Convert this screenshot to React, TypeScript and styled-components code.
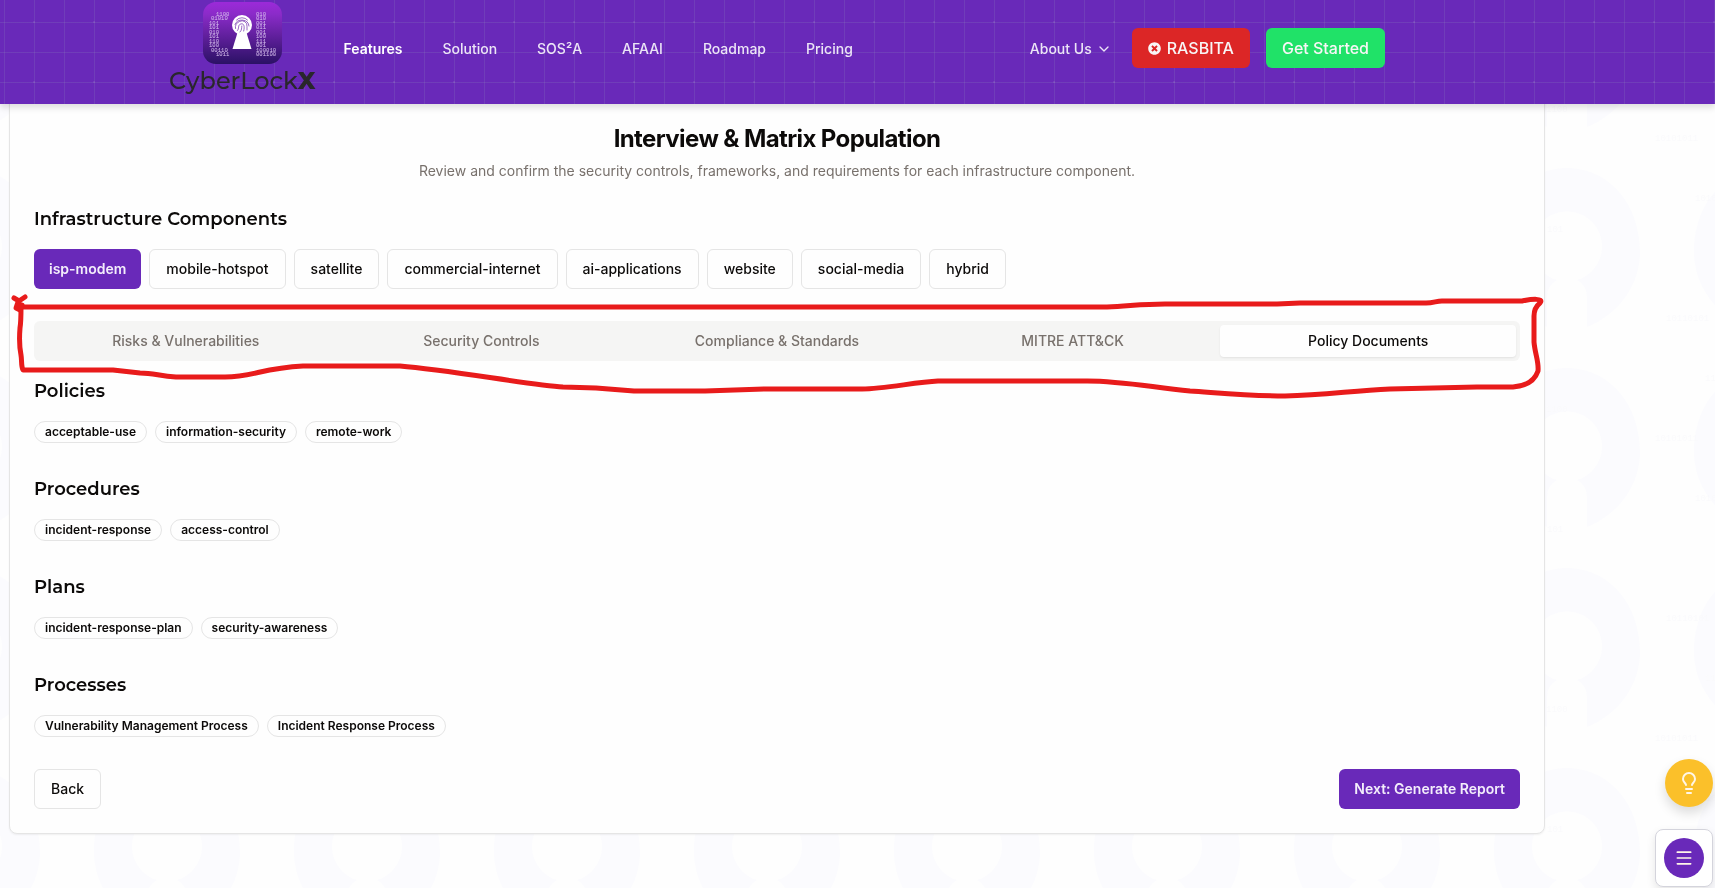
import React, { useState } from "react";
import styled, { createGlobalStyle } from "styled-components";
import { ChevronDown, Lightbulb, Menu } from "lucide-react";
import { FaTimesCircle } from "react-icons/fa";

const purple = "#6929b9";
const ink = "#0c0a09";
const muted = "#78716c";
const line = "#e5e5e5";

const GlobalStyle = createGlobalStyle`
  *, *::before, *::after { box-sizing: border-box; }
  body {
    margin: 0;
    background: #fefefe;
    color: ${ink};
    font-family: Inter, "Liberation Sans", sans-serif;
    font-size: 14px;
    line-height: 20px;
  }
  button { font: inherit; cursor: pointer; }
  a { color: inherit; text-decoration: none; }
  h1, h2, p { margin: 0; }
`;

const Backdrop = styled.svg`
  position: fixed;
  inset: 0;
  width: 100%;
  height: 100%;
  z-index: -1;
`;

const Header = styled.header`
  position: fixed;
  inset: 0 0 auto 0;
  z-index: 10;
  height: 104px;
  padding-right: 161px;
  background-color: ${purple};
  background-image:
    radial-gradient(circle at 1px 1px, rgba(255, 255, 255, 0.08) 1px, transparent 1px),
    linear-gradient(90deg, rgba(150, 170, 190, 0.16) 1px, transparent 1px),
    linear-gradient(rgba(150, 170, 190, 0.16) 1px, transparent 1px);
  background-size: 60px 60px, 30px 30px, 30px 30px;
  background-position: 33px 21px, 4px 22px, 4px 22px;
  box-shadow: 0 4px 6px rgba(0, 0, 0, 0.12);
`;

const HeaderInner = styled.div`
  display: flex;
  align-items: flex-start;
  max-width: 1280px;
  margin: 0 auto;
  padding: 0 32px;
`;

const LogoLink = styled.a`
  display: flex;
  flex-direction: column;
  align-items: center;
  padding-top: 2px;
  color: #29272b;
`;

const Wordmark = styled.span`
  font-family: Montserrat, "DejaVu Sans", sans-serif;
  font-size: 24px;
  line-height: 34px;
  font-weight: 500;

  b { font-weight: 800; }
`;

const Nav = styled.nav`
  display: flex;
  gap: 40px;
  margin-left: 28px;
  padding-top: 39px;
`;

const NavLink = styled.a<{ $current?: boolean }>`
  color: ${(p) => (p.$current ? "#ffffff" : "#ece5f6")};
  font-weight: ${(p) => (p.$current ? 600 : 500)};
`;

const HeaderActions = styled.div`
  display: flex;
  align-items: center;
  gap: 16px;
  margin-left: auto;
  padding-top: 28px;
`;

const MenuButton = styled.button`
  display: flex;
  align-items: center;
  gap: 4px;
  margin-right: 4px;
  padding: 2px 0 0;
  border: 0;
  background: none;
  color: #ece5f6;
  font-weight: 500;
`;

const ActionLink = styled.a<{ $tone: string }>`
  display: flex;
  align-items: center;
  gap: 6px;
  height: 40px;
  padding: 0 16px;
  border-radius: 6px;
  background: ${(p) => p.$tone};
  color: #f8f6f6;
  font-size: 16px;
  font-weight: 500;
`;

const Main = styled.main`
  padding: 96px 170px 54px 9px;
`;

const Card = styled.section`
  padding: 24px;
  border: 1px solid ${line};
  border-radius: 8px;
  background: #fefefe;
  box-shadow: 0 1px 2px rgba(0, 0, 0, 0.06);
`;

const Intro = styled.div`
  display: flex;
  flex-direction: column;
  gap: 6px;
  margin-bottom: 24px;
  padding-top: 2px;
  text-align: center;
`;

const Title = styled.h1`
  font-size: 24px;
  line-height: 32px;
  font-weight: 700;
  letter-spacing: -0.025em;
`;

const Subtitle = styled.p`
  color: ${muted};
`;

const Heading = styled.h2`
  margin-bottom: 16px;
  font-family: Montserrat, Inter, sans-serif;
  font-size: 18px;
  line-height: 28px;
  font-weight: 600;
`;

const Row = styled.div`
  display: flex;
  flex-wrap: wrap;
  gap: 8px;
`;

const Button = styled.button<{ $primary?: boolean }>`
  height: 40px;
  padding: 0 ${(p) => (p.$primary ? 15 : 16)}px;
  border: ${(p) => (p.$primary ? "0" : `1px solid ${line}`)};
  border-radius: 6px;
  background: ${(p) => (p.$primary ? purple : "#fefefe")};
  color: ${(p) => (p.$primary ? "#f3edfb" : ink)};
  font-weight: ${(p) => (p.$primary ? 600 : 500)};
`;

const TabList = styled.div`
  display: grid;
  grid-template-columns: repeat(5, 1fr);
  margin: 32px 0 16px;
  padding: 4px;
  border-radius: 6px;
  background: #f5f5f4;
`;

const Tab = styled.button<{ $active: boolean }>`
  height: 32px;
  padding: 0 12px;
  border: 0;
  border-radius: 4px;
  background: ${(p) => (p.$active ? "#fefefe" : "transparent")};
  box-shadow: ${(p) => (p.$active ? "0 1px 2px rgba(0, 0, 0, 0.08)" : "none")};
  color: ${(p) => (p.$active ? ink : muted)};
  font-weight: 500;
`;

const Groups = styled.div`
  display: flex;
  flex-direction: column;
  gap: 32px;
`;

const Badge = styled.span`
  padding: 2px 10px;
  border: 1px solid ${line};
  border-radius: 11px;
  font-size: 12px;
  line-height: 16px;
  height: 22px;
  font-weight: 600;
`;

const Footer = styled.div`
  display: flex;
  justify-content: space-between;
  margin-top: 32px;
`;

const Floating = styled.div`
  position: fixed;
  right: 2px;
  bottom: 1px;
  z-index: 20;
  display: flex;
  flex-direction: column;
  align-items: flex-end;
  gap: 22px;
`;

const RoundButton = styled.button<{ $size: number; $tone: string }>`
  display: grid;
  place-items: center;
  width: ${(p) => p.$size}px;
  height: ${(p) => p.$size}px;
  padding: 0;
  border: 0;
  border-radius: 50%;
  background: ${(p) => p.$tone};
  color: #fff6e8;
  box-shadow: ${(p) => (p.$size > 40 ? "0 6px 12px rgba(0, 0, 0, 0.14)" : "none")};
`;

const MenuFrame = styled.div`
  padding: 8px;
  border: 1px solid #d4d4dc;
  border-radius: 8px;
  background: #ffffff;
  box-shadow: 0 4px 10px rgba(0, 0, 0, 0.1);
`;

const Markup = styled.svg`
  position: absolute;
  top: 0;
  left: 0;
  z-index: 5;
  pointer-events: none;
`;

const leftBits: [number, string][] = [
  [13, "1100"], [8, "01010"], [6, "101"], [6, "101"], [6, "010"],
  [6, "101"], [6, "110"], [6, "100"], [8, "00110"], [13, "1011"],
];
const rightBits = ["010", "010", "001", "011", "001", "100", "111", "001", "100010", "001100"];

function Logo() {
  return (
    <svg width="79" height="62" viewBox="0 0 79 62" aria-hidden="true">
      <defs>
        <linearGradient id="logoFill" x1="0" y1="0" x2="0" y2="1">
          <stop offset="0" stopColor="#9c2ad9" />
          <stop offset="0.2" stopColor="#8a2bc8" />
          <stop offset="1" stopColor="#2b1165" />
        </linearGradient>
      </defs>
      <rect width="79" height="62" rx="13" fill="url(#logoFill)" />
      <g fill="#d9c3ef" fontFamily="Liberation Mono, monospace" fontSize="5.6">
        {leftBits.map(([x, bits], i) => (
          <text key={i} x={x} y={13.5 + i * 4.5}>{bits}</text>
        ))}
        {rightBits.map((bits, i) => (
          <text key={i} x="53" y={13.5 + i * 4.5}>{bits}</text>
        ))}
      </g>
      <path d="M35 29h8l5.500 18h-19z" fill="#ffffff" />
      <circle cx="39" cy="23" r="10" fill="#ffffff" />
      <g fill="none" stroke="#6a25a8" strokeWidth="0.700" strokeLinecap="round">
        <path d="M33.500 18a7.500 7.500 0 0 1 11 0M32 22.500a7.200 6.500 0 0 1 14 1.500M32.500 26.500a6.500 6 0 0 1 4-7a5 5 0 0 1 7.500 5v3.500M34.500 28.500c2-2 0-5.500 3.200-6.500c3-1 4.300 2 3 7M37 30c2-2 1.500-4 1.800-6" />
      </g>
    </svg>
  );
}

const codeBits: [number, number, string][] = [
  [46, 112, "1100"], [47, 232, "101"], [155, 141, "10101011"],
  [195, 201, "10101"], [166, 21, "10110101"], [205, 81, "110100"],
];

function KeyholeBackdrop() {
  return (
    <Backdrop aria-hidden="true">
      <defs>
        <pattern id="keyholes" width="200" height="200" x="67" y="152" patternUnits="userSpaceOnUse">
          <path
            fill="#fbfbfe"
            fillRule="evenodd"
            d="M80 175C48 162 27 133 27 100C27 52 58 16 100 16C142 16 173 52 173 100C173 133 152 162 120 175V146Q120 133 110 128A35 35 0 1 0 90 128Q80 133 80 146Z"
          />
        </pattern>
        <pattern id="bits" width="300" height="300" x="1500" y="0" patternUnits="userSpaceOnUse">
          <g fill="#fafafc" fontFamily="Liberation Mono, monospace" fontSize="9">
            {codeBits.map(([x, y, bits], i) => (
              <text key={i} x={x} y={y}>{bits}</text>
            ))}
          </g>
        </pattern>
      </defs>
      <rect width="100%" height="100%" fill="url(#keyholes)" />
      <rect width="100%" height="100%" fill="url(#bits)" />
    </Backdrop>
  );
}

function HandDrawnOutline() {
  return (
    <Markup width="1550" height="410" viewBox="0 0 1550 410" aria-hidden="true">
      <g fill="none" stroke="#e81b1b" strokeWidth="5" strokeLinecap="round" strokeLinejoin="round">
        <path d="M22 307H1107C1130 306 1142 304 1165 304H1277L1300 303H1426C1434 303 1436 301 1442 301H1522C1532 299 1544 298 1540 303C1535 307 1534 311 1534 316V342C1535 354 1539 362 1538 371C1535 380 1527 386 1513 387H1477L1390 389C1350 391 1325 395 1285 396C1250 396 1220 393 1190 391C1150 387 1122 381 1087 381H938C915 382 885 389 862 389H765L705 391H634L596 388L563 387C530 385 450 370 400 366H303C262 368 253 377 225 377H176C159 376 154 373 140 373L113 370H23C21 366 22 361 21 355C19 345 19 340 20 328C21 322 21 314 21 307" />
        <path d="M14 298L19 301L25 297M18 302L16 308L20 310L22 305L18 305" />
      </g>
    </Markup>
  );
}

const navItems = ["Features", "Solution", "SOS²A", "AFAAI", "Roadmap", "Pricing"];
const components = [
  "isp-modem", "mobile-hotspot", "satellite", "commercial-internet",
  "ai-applications", "website", "social-media", "hybrid",
];
const tabs = [
  "Risks & Vulnerabilities", "Security Controls", "Compliance & Standards",
  "MITRE ATT&CK", "Policy Documents",
];
const groups = [
  { name: "Policies", items: ["acceptable-use", "information-security", "remote-work"] },
  { name: "Procedures", items: ["incident-response", "access-control"] },
  { name: "Plans", items: ["incident-response-plan", "security-awareness"] },
  { name: "Processes", items: ["Vulnerability Management Process", "Incident Response Process"] },
];

export default function App() {
  const [component, setComponent] = useState("isp-modem");
  const [tab, setTab] = useState("Policy Documents");

  return (
    <>
      <GlobalStyle />
      <KeyholeBackdrop />
      <Header>
        <HeaderInner>
          <LogoLink href="#">
            <Logo />
            <Wordmark>CyberLock<b>X</b></Wordmark>
          </LogoLink>
          <Nav>
            {navItems.map((item, i) => (
              <NavLink key={item} href="#" $current={i === 0}>{item}</NavLink>
            ))}
          </Nav>
          <HeaderActions>
            <MenuButton type="button">
              About Us <ChevronDown size={16} />
            </MenuButton>
            <ActionLink href="#" $tone="#dc2626">
              <FaTimesCircle size={13} /> RASBITA
            </ActionLink>
            <ActionLink href="#" $tone="#20e268">Get Started</ActionLink>
          </HeaderActions>
        </HeaderInner>
      </Header>

      <Main>
        <Card>
          <Intro>
            <Title>Interview &amp; Matrix Population</Title>
            <Subtitle>
              Review and confirm the security controls, frameworks, and requirements for each
              infrastructure component.
            </Subtitle>
          </Intro>

          <Heading>Infrastructure Components</Heading>
          <Row>
            {components.map((name) => (
              <Button
                key={name}
                type="button"
                $primary={name === component}
                onClick={() => setComponent(name)}
              >
                {name}
              </Button>
            ))}
          </Row>

          <TabList role="tablist">
            {tabs.map((name) => (
              <Tab
                key={name}
                type="button"
                role="tab"
                aria-selected={name === tab}
                $active={name === tab}
                onClick={() => setTab(name)}
              >
                {name}
              </Tab>
            ))}
          </TabList>

          <Groups>
            {groups.map((group) => (
              <section key={group.name}>
                <Heading>{group.name}</Heading>
                <Row>
                  {group.items.map((item) => (
                    <Badge key={item}>{item}</Badge>
                  ))}
                </Row>
              </section>
            ))}
          </Groups>

          <Footer>
            <Button type="button">Back</Button>
            <Button type="button" $primary>Next: Generate Report</Button>
          </Footer>
        </Card>
      </Main>

      <HandDrawnOutline />

      <Floating>
        <RoundButton type="button" aria-label="Tips" $size={48} $tone="#fbc02a">
          <Lightbulb size={24} />
        </RoundButton>
        <MenuFrame>
          <RoundButton type="button" aria-label="Open menu" $size={40} $tone={purple}>
            <Menu size={20} />
          </RoundButton>
        </MenuFrame>
      </Floating>
    </>
  );
}
